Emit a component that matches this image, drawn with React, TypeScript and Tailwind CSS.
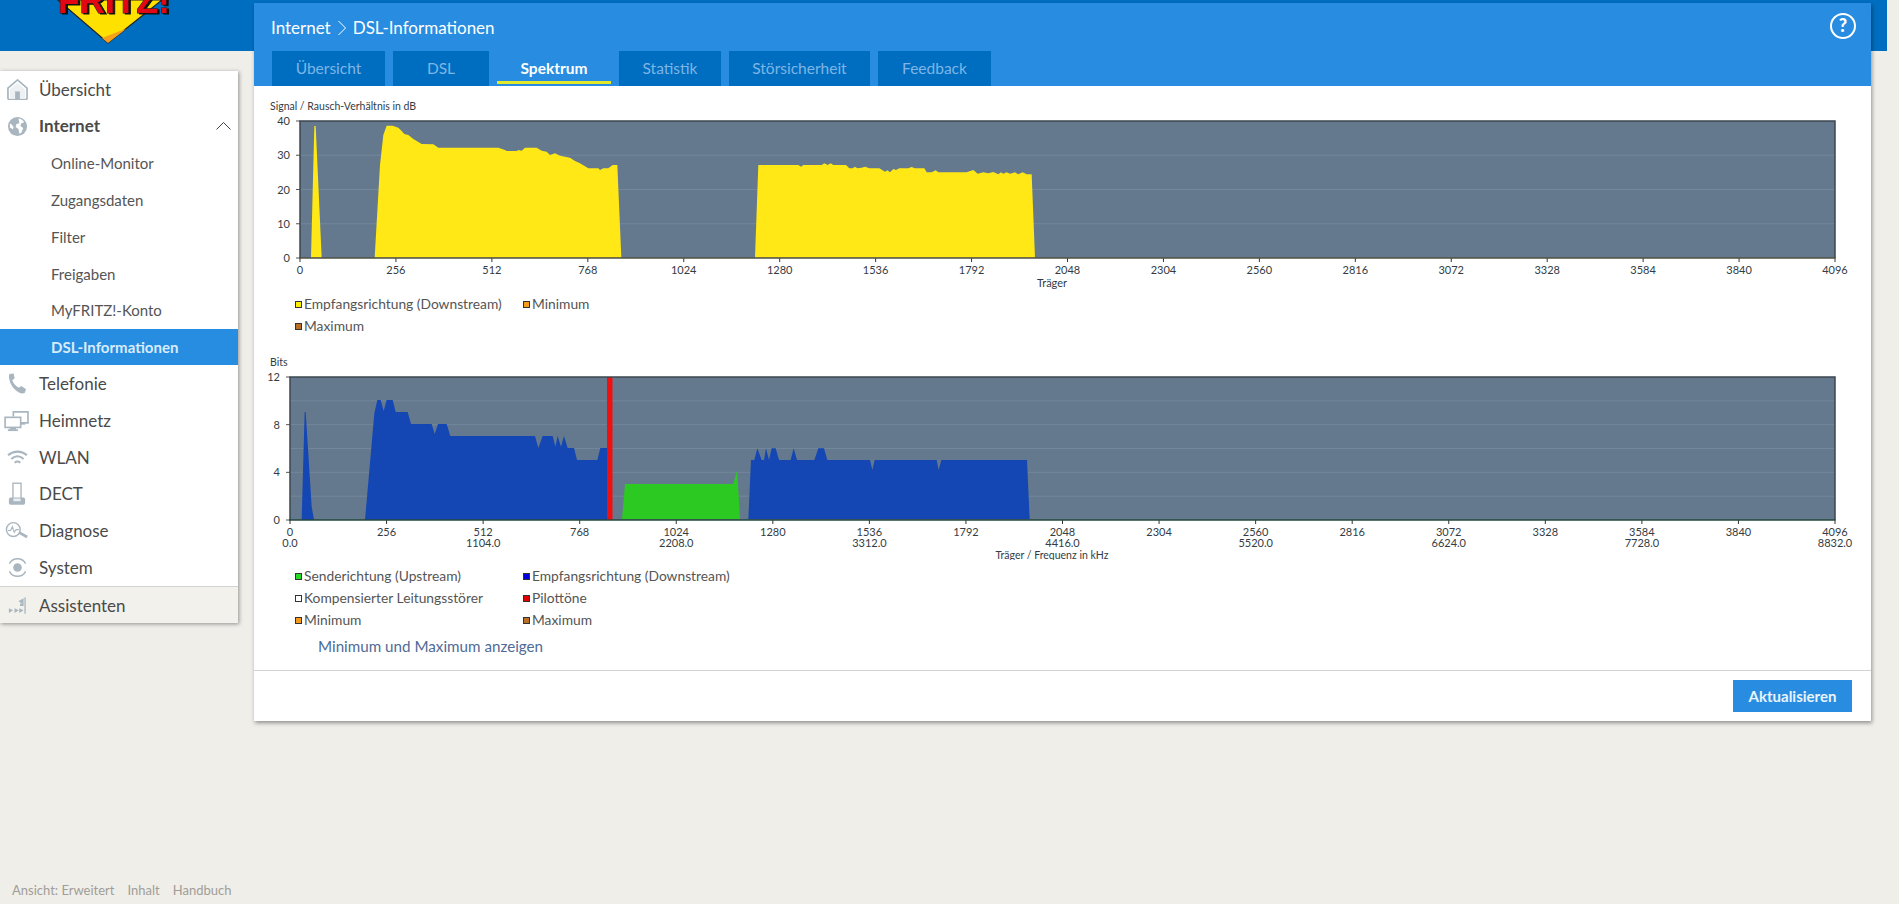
import React from "react";

const FONT = "font-['Lato','Liberation_Sans',sans-serif]";

type P = number[];
const pts = (p: P, ox: number, oy: number) => {
  const out: string[] = [];
  for (let i = 0; i < p.length; i += 2) out.push(`${ox + p[i] / 3},${oy + p[i + 1] / 3}`);
  return out.join(" ");
};

const Y1 = [153,488,163,93,167,93,185,488];
const Y2 = [344,488,360,210,370,120,380,92,398,92,415,98,425,108,433,117,445,120,460,132,485,147,520,148,535,158,715,158,735,165,740,168,770,168,775,165,785,167,795,158,830,158,845,167,860,170,870,180,885,175,900,182,930,188,945,198,960,205,985,220,1015,220,1020,225,1030,220,1045,220,1058,210,1072,210,1084,488];
const Y3 = [285,488,295,210,415,210,423,215,430,210,485,210,493,205,503,210,512,205,520,210,558,210,568,220,578,220,585,215,592,220,605,218,615,215,628,220,658,220,675,230,682,226,690,232,700,222,708,225,718,220,745,220,755,216,765,220,793,220,800,232,815,232,827,226,835,232,920,232,940,225,953,236,970,232,985,235,1000,231,1015,238,1023,232,1030,236,1040,232,1050,236,1065,232,1075,238,1088,232,1100,238,1115,238,1125,488];
const B1 = [125,510,134,186,137,186,155,470,162,510];
const B2 = [315,510,343,190,352,150,362,150,371,183,380,150,398,150,407,186,443,186,453,222,515,222,524,252,534,222,560,222,571,258,825,258,835,294,848,258,878,258,886,290,893,258,903,290,912,258,923,294,942,294,951,330,1012,330,1021,294,1042,294,1042,510];
const G1 = [66,478,75,372,400,372,410,335,412,335,420,478];
const B3 = [445,478,453,300,463,300,472,265,485,300,492,300,498,265,507,300,515,265,527,265,537,300,572,300,581,265,591,300,643,300,655,265,672,265,682,300,810,300,817,330,824,300,1010,300,1016,330,1024,300,1281,300,1289,478];

const TICKS = Array.from({ length: 17 }, (_, i) => i * 256);
const AXIS_FONT = { fontFamily: "Lato, 'Liberation Sans', sans-serif", fontSize: 11, fill: "#333c44" };

function Axis({ x0, x1, top, bottom, yTicks, minor, freq }: { x0: number; x1: number; top: number; bottom: number; yTicks: number[]; minor: number[]; freq?: boolean }) {
  const max = yTicks[yTicks.length - 1];
  const yOf = (v: number) => bottom - ((bottom - top) * v) / max;
  const xOf = (v: number) => x0 + ((x1 - x0) * v) / 4096;
  return (
    <>
      {minor.map((v) => (
        <line key={v} x1={x0} x2={x1} y1={yOf(v)} y2={yOf(v)} stroke="#72879b" strokeWidth="1" />
      ))}
      {yTicks.map((v) => (
        <g key={v}>
          <line x1={x0 - 4} x2={x0} y1={yOf(v)} y2={yOf(v)} stroke="#555" strokeWidth="1" />
          <text x={x0 - 10} y={yOf(v) + 4} textAnchor="end" {...AXIS_FONT}>{v}</text>
        </g>
      ))}
      {TICKS.map((v) => (
        <g key={v}>
          <line x1={xOf(v)} x2={xOf(v)} y1={bottom} y2={bottom + 4} stroke="#333" strokeWidth="1" />
          <text x={xOf(v)} y={bottom + 16} textAnchor="middle" {...AXIS_FONT}>{v}</text>
          {freq && v % 512 === 0 && (
            <text x={xOf(v)} y={bottom + 27} textAnchor="middle" {...AXIS_FONT}>{((v / 512) * 1104).toFixed(1)}</text>
          )}
        </g>
      ))}
    </>
  );
}

function ChartOne() {
  return (
    <svg viewBox="254 98 1617 194" width="1617" height="194" className="block">
      <text x="270" y="110" {...AXIS_FONT} fontSize="10.5">Signal / Rausch-Verhältnis in dB</text>
      <rect x="300" y="121" width="1535" height="137" fill="#64798e" />
      <Axis x0={300} x1={1835} top={121} bottom={258} yTicks={[0, 10, 20, 30, 40]} minor={[10, 20, 30]} />
      <polygon points={pts(Y1, 260, 95)} fill="#ffe816" />
      <polygon points={pts(Y2, 260, 95)} fill="#ffe816" />
      <polygon points={pts(Y3, 660, 95)} fill="#ffe816" />
      <path d="M300 258V121H1835V258" fill="none" stroke="#3d4750" strokeWidth="1.5" />
      <line x1="299" x2="1835.500" y1="258" y2="258" stroke="#4f5040" strokeWidth="1.5" />
      <text x="1052" y="287" textAnchor="middle" {...AXIS_FONT}>Träger</text>
    </svg>
  );
}

function ChartTwo() {
  return (
    <svg viewBox="254 352 1617 208" width="1617" height="208" className="block">
      <text x="270" y="366" {...AXIS_FONT} fontSize="10.5">Bits</text>
      <rect x="290" y="377" width="1545" height="143" fill="#64798e" />
      <Axis x0={290} x1={1835} top={377} bottom={520} yTicks={[0, 4, 8, 12]} minor={[2, 4, 6, 8, 10]} freq />
      <polygon points={pts(B1, 260, 350)} fill="#1446b4" />
      <polygon points={pts(B2, 260, 350)} fill="#1446b4" />
      <polygon points={pts(G1, 600, 360)} fill="#2bc922" />
      <polygon points={pts(B3, 600, 360)} fill="#1446b4" />
      <rect x="607" y="377" width="5.500" height="143" fill="#f01010" />
      <path d="M290 520V377H1835V520" fill="none" stroke="#3d4750" strokeWidth="1.5" />
      <line x1="289" x2="1835.500" y1="520" y2="520" stroke="#24483c" strokeWidth="1.5" />
      <text x="1052" y="559" textAnchor="middle" {...AXIS_FONT} fontSize="10.5">Träger / Frequenz in kHz</text>
    </svg>
  );
}

function Logo() {
  return (
    <svg width="140" height="50" viewBox="0 0 140 50" className="block">
      <polygon points="18,0 68,43 122,0" fill="#ffe100" stroke="#222" strokeWidth="1.200" />
      <polygon points="86,29 68,43 62,38 80,31" fill="#f5a21a" />
      <text
        x="18"
        y="13"
        textLength="112"
        lengthAdjust="spacingAndGlyphs"
        fontFamily="'Liberation Sans', sans-serif"
        fontWeight="700"
        fontSize="36"
        fill="#e30613"
        stroke="#1a1a1a"
        strokeWidth="1"
        className="[paint-order:stroke] [filter:drop-shadow(2px_1px_0_#111)]"
      >
        FRITZ!
      </text>
    </svg>
  );
}

const ic = "#a9b6bf";
const icons: Record<string, React.ReactNode> = {
  home: (
    <svg viewBox="0 0 22 22" className="w-[21px] h-[21px]"><path d="M3 11 11 4l8 7v9H3Z" fill="#eef1f3" /><path d="M1 9.500 11 1l10 8.500V20a1.500 1.500 0 0 1-1.500 1.500h-17A1.500 1.500 0 0 1 1 20Z" fill="none" stroke={ic} strokeWidth="1.800" /><rect x="8.500" y="13" width="5" height="8" fill={ic} /></svg>
  ),
  globe: (
    <svg viewBox="0 0 22 22" className="w-[21px] h-[21px]"><circle cx="11" cy="11" r="10" fill={ic} /><path d="M12 2.500c3 .5 5 2 6 4l-3 1-1 3 3 2-2 5-2 1-1-5-3-2 1-3 3-1Z" fill="#fff" /><path d="M3 8c2 0 3 2 4 4l-1 2-3-2Z" fill="#fff" /></svg>
  ),
  phone: (
    <svg viewBox="0 0 22 22" className="w-[21px] h-[21px]"><path d="M2.500 1 7 .5l1 5-2.500 2c1 3 3.500 6 7 8l2.500-2 5 3.500-1.500 4c-3 1.500-7-.5-11-4.500S1 5 2.500 1Z" fill={ic} /></svg>
  ),
  net: (
    <svg viewBox="0 0 28 24" className="w-[26px] h-[22px]"><path d="M10 7V2h16v12H16" fill="none" stroke={ic} strokeWidth="1.800" /><rect x="1" y="8" width="17" height="11" fill="#fff" stroke={ic} strokeWidth="1.800" /><rect x="6" y="19" width="7" height="2.500" fill={ic} /><rect x="4" y="21" width="11" height="2" fill={ic} /><rect x="18" y="14" width="5" height="2" fill={ic} /></svg>
  ),
  wifi: (
    <svg viewBox="0 0 22 18" className="w-[21px] h-[17px]" fill="none" stroke={ic} strokeWidth="2.200"><path d="M1 6.500c6-5 14-5 20 0" /><path d="M4.500 10.500c4-3.500 9-3.500 13 0" /><path d="M8 14.500c2-1.700 4-1.700 6 0" /></svg>
  ),
  dect: (
    <svg viewBox="0 0 20 26" className="w-[18px] h-[24px]"><rect x="5.500" y="1" width="9" height="18" fill="none" stroke={ic} strokeWidth="1.500" /><rect x="1" y="17" width="18" height="8" rx="2" fill={ic} /><rect x="6" y="18" width="8" height="3" fill="#e8edf0" /></svg>
  ),
  diag: (
    <svg viewBox="0 0 26 20" className="w-[24px] h-[19px]" fill="none" stroke={ic}><circle cx="9" cy="9" r="7.500" strokeWidth="1.500" /><path d="M3 10h3l2-4 2 6 2-3h3" strokeWidth="1.200" /><path d="m15 12 9 5" strokeWidth="3" /></svg>
  ),
  sys: (
    <svg viewBox="0 0 22 22" className="w-[21px] h-[21px]" fill="none" stroke={ic} strokeWidth="1.500"><circle cx="11" cy="11" r="4.500" fill={ic} stroke="none" /><path d="M2.500 7A9.500 9.500 0 0 1 19.500 7M19.500 15A9.500 9.500 0 0 1 2.500 15" /></svg>
  ),
  wiz: (
    <svg viewBox="0 0 22 20" className="w-[19px] h-[20px]" fill={ic}><rect x="19" y="0" width="1.500" height="19" /><path d="M18 1v7l-6-3.500Z" /><path d="M1 12.500 6 15l-5 3ZM7.500 12.500l5 2.500-5 3Z" /><path d="M13 12.500 18 15l-5 3Z" /><path d="M14 7h4v3h-4Z" /></svg>
  ),
};

const MainRow = ({ icon, label, bold, chevron }: { icon: string; label: string; bold?: boolean; chevron?: boolean }) => (
  <div className="h-[36.8px] relative flex items-center pl-[39px] text-[17px] text-[#4a4a4a]">
    <span className="absolute left-[2px] w-[30px] flex items-center justify-center">{icons[icon]}</span>
    <span className={bold ? "font-bold" : ""}>{label}</span>
    {chevron && (
      <svg className="absolute left-[216px]" width="15" height="8" viewBox="0 0 15 8" fill="none" stroke="#444" strokeWidth="1"><path d="M.5 7.500 7.500.5l7 7" /></svg>
    )}
  </div>
);

const SubRow = ({ label, active }: { label: string; active?: boolean }) => (
  <div className={`h-[36.8px] flex items-center pl-[51px] pt-[1px] text-[15px] ${active ? "bg-[#278de0] text-[#d8ebfb] font-bold" : "text-[#555]"}`}>{label}</div>
);

function Sidebar() {
  return (
    <nav className="w-[238px] bg-white shadow-[1px_1px_4px_rgba(0,0,0,0.4)]">
      <MainRow icon="home" label="Übersicht" />
      <MainRow icon="globe" label="Internet" bold chevron />
      {["Online-Monitor", "Zugangsdaten", "Filter", "Freigaben", "MyFRITZ!-Konto"].map((s) => <SubRow key={s} label={s} />)}
      <SubRow label="DSL-Informationen" active />
      <MainRow icon="phone" label="Telefonie" />
      <MainRow icon="net" label="Heimnetz" />
      <MainRow icon="wifi" label="WLAN" />
      <MainRow icon="dect" label="DECT" />
      <MainRow icon="diag" label="Diagnose" />
      <MainRow icon="sys" label="System" />
      <div className="h-[37px] border-t border-[#d2d2d2] bg-[#f3f1ec]">
        <MainRow icon="wiz" label="Assistenten" />
      </div>
    </nav>
  );
}

const Legend = ({ color, label }: { color: string; label: string }) => (
  <div className="flex items-center gap-[2px] h-[22px]">
    <span className="w-[5px] h-[5px] box-content border border-[#333]" style={{ background: color }} />
    <span>{label}</span>
  </div>
);

function LegendGrid({ items }: { items: [string, string][] }) {
  return (
    <div className="grid grid-cols-[228px_1fr] pl-[41px] text-[13.8px] text-[#555]">
      {items.map(([c, l]) => <Legend key={l} color={c} label={l} />)}
    </div>
  );
}

const TABS = ["Übersicht", "DSL", "Spektrum", "Statistik", "Störsicherheit", "Feedback"];
const TW = ["w-[113px]", "w-[96px]", "w-[114px]", "w-[102px]", "w-[141px]", "w-[113px]"];

export default function App() {
  return (
    <div className={`${FONT} relative w-[1899px] h-[904px] overflow-hidden bg-[#f0eee9]`}>
      <div className="absolute left-0 top-0 w-[1887px] h-[51px] bg-[#006ec0]" />
      <div className="absolute left-[40px] top-0"><Logo /></div>
      <div className="absolute left-0 top-[71px]"><Sidebar /></div>

      <main className="absolute left-[254px] top-[3px] w-[1617px] h-[718px] bg-white shadow-[1px_2px_4px_rgba(0,0,0,0.4)] flex flex-col">
        <header className="h-[83px] bg-[#288de0] relative shrink-0">
          <div className="absolute left-[17px] top-[13px] text-[17px] text-white leading-6 flex items-center gap-[6px]">
            <span>Internet</span>
            <svg width="10" height="18" viewBox="0 0 10 18" fill="none" stroke="#fff" strokeWidth="1"><path d="m1.500 2 7 7-7 7" /></svg>
            <span>DSL-Informationen</span>
          </div>
          <svg className="absolute left-[1576px] top-[10px]" width="26" height="26" viewBox="0 0 26 26" fill="none">
            <circle cx="13" cy="13" r="12" stroke="#fff" strokeWidth="2" />
            <text x="13" y="19" textAnchor="middle" fontFamily="Lato, sans-serif" fontWeight="900" fontSize="18" fill="#fff">?</text>
          </svg>
          <div className="absolute left-[18px] top-[48px] flex gap-[8px]">
            {TABS.map((t, i) => (
              <div key={t} className={`${TW[i]} h-[35px] flex items-center justify-center text-[15.5px] ${t === "Spektrum" ? "relative bg-[#288de0] text-white font-bold" : "bg-[#006ec0] text-[#7fb5e6]"}`}>
                {t}
                {t === "Spektrum" && <span className="absolute left-0 right-0 top-[30px] h-[3px] bg-[#e4e82a]" />}
              </div>
            ))}
          </div>
        </header>
        <section className="flex-1 flex flex-col pt-[12px]">
          <ChartOne />
          <div className="mt-[1px]">
            <LegendGrid items={[["#ffee00", "Empfangsrichtung (Downstream)"], ["#f59a1b", "Minimum"], ["#b96f25", "Maximum"]]} />
          </div>
          <div className="mt-[15px]"><ChartTwo /></div>
          <div className="mt-[5px]">
            <LegendGrid items={[["#22dd22", "Senderichtung (Upstream)"], ["#0000dd", "Empfangsrichtung (Downstream)"], ["#ffffff", "Kompensierter Leitungsstörer"], ["#e00000", "Pilottöne"], ["#f59a1b", "Minimum"], ["#b96f25", "Maximum"]]} />
          </div>
          <div className="pl-[64px] mt-[3px] h-[24px] text-[15.2px] leading-6 text-[#4f6b96]">Minimum und Maximum anzeigen</div>
          <div className="mt-auto h-[51px] border-t border-[#d3d3d3] flex items-start justify-end pr-[19px] pt-[9px]">
            <button className="w-[119px] h-[32px] bg-[#288de0] text-[#e8f3fc] font-bold text-[15px]">Aktualisieren</button>
          </div>
        </section>
      </main>

      <footer className="absolute left-[12px] top-[881px] flex gap-[13px] text-[13px] leading-[18px] text-[#a09d98]">
        <span>Ansicht: Erweitert</span><span>Inhalt</span><span>Handbuch</span>
      </footer>
    </div>
  );
}
